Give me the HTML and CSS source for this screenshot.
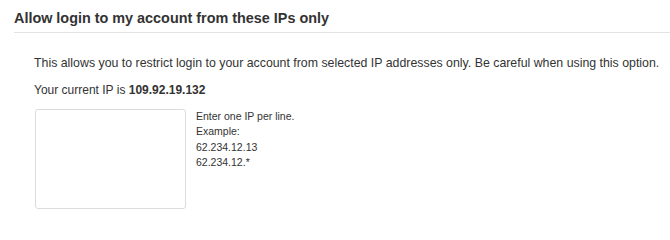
FILE: index.html
```html
<!DOCTYPE html>
<html>
<head>
<meta charset="utf-8">
<link rel="stylesheet" href="styles.css">
</head>
<body>
<div class="panel">
  <h2 class="title">Allow login to my account from these IPs only</h2>
  <div class="content">
    <p class="desc">This allows you to restrict login to your account from selected IP addresses only. Be careful when using this option.</p>
    <p class="current">Your current IP is <strong>109.92.19.132</strong></p>
    <div class="field">
      <textarea class="ips"></textarea>
      <div class="help">
        <div>Enter one IP per line.</div>
        <div>Example:</div>
        <div>62.234.12.13</div>
        <div>62.234.12.*</div>
      </div>
    </div>
  </div>
</div>
</body>
</html>
```

FILE: styles.css
```css
html, body {
  margin: 0;
  padding: 0;
  background: #fff;
}
body {
  font-family: "Liberation Sans", Arial, sans-serif;
  color: #333;
}
.panel {
  padding-left: 14px;
}
.title {
  margin: 0;
  padding-top: 9px;
  height: 23px;
  font-size: 14.4px;
  line-height: 18px;
  font-weight: bold;
  color: #333;
  border-bottom: 1px solid #e3e3e3;
}
.content {
  padding-left: 20px;
  padding-top: 22px;
}
.desc {
  margin: 0;
  font-size: 12.35px;
  line-height: 16px;
}
.current {
  margin: 11px 0 0;
  font-size: 12px;
  line-height: 16px;
}
.field {
  display: flex;
  gap: 10px;
  margin-top: 11px;
}
.ips {
  box-sizing: border-box;
  width: 151px;
  height: 100px;
  margin: 0 0 0 1px;
  border: 1px solid #dcdcdc;
  border-radius: 3px;
  resize: none;
  background: #fff;
  padding: 4px;
}
.help {
  font-size: 10.5px;
  line-height: 15.3px;
  padding-top: 0;
}
```
